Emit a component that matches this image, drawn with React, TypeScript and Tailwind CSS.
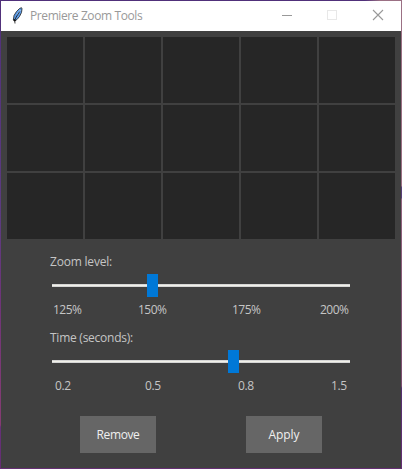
import React from 'react';

function Feather() {
  return (
    <svg className="ml-[10px] mt-[6px] h-[18px] w-[14px] shrink-0" viewBox="0 0 14 18">
      <path d="M10.5 .7 8.5 1.5 5.5 4.5 3 8.5 2.4 12.5 3.6 14 6 12.5 8.5 9.5 10.5 5.5 11 1.8Z" fill="#5b9ae6" stroke="#222" strokeWidth=".8" />
      <path d="M9.5 3 6 8" stroke="#9cc8f5" strokeWidth="1.3" />
      <path d="M8.7 4.5 5.2 10 3.7 13.5 4 16.5" fill="none" stroke="#111" strokeWidth=".8" />
      <path d="M2.5 12.5 4.5 13.8" stroke="#111" strokeWidth="1.5" />
    </svg>
  );
}

function TitleBar() {
  return (
    <header className="flex h-[30px] bg-white">
      <Feather />
      <h1 className="ml-[5px] grow text-[12px] leading-[30px] tracking-[-0.4px] text-[#999]">Premiere Zoom Tools</h1>
      <svg className="h-[30px] w-[137px] shrink-0" viewBox="0 0 137 30" fill="none" shapeRendering="crispEdges">
        <path d="M18 14.5h10" stroke="#999" />
        <rect x="63.5" y="9.5" width="9" height="9" stroke="#e8e8e8" />
        <path d="m109 9 10 10M119 9l-10 10" stroke="#999" shapeRendering="auto" strokeWidth="1.1" />
      </svg>
    </header>
  );
}

interface SliderProps {
  label: string;
  labelClass: string;
  thumbClass: string;
  ticks: { text: string; className: string }[];
  tickClass: string;
}

function Slider({ label, labelClass, thumbClass, ticks, tickClass }: SliderProps) {
  return (
    <section className="ml-[49px] h-[76px] w-[304px]">
      <div className={`h-[19px] text-[12px] leading-4 text-[#c5c5c5] ${labelClass}`}>{label}</div>
      <div className="ml-[2px] flex h-[25px] w-[298px] items-center">
        <div className="relative h-[3px] w-full border-y border-[#d6d6d6] bg-[#f0f0e8]">
          <span className={`absolute top-[-11px] h-[23px] w-[11px] bg-[#0078d7] ${thumbClass}`} />
        </div>
      </div>
      <div className={`flex pt-1 text-[12px] leading-4 text-[#c5c5c5] ${tickClass}`}>
        {ticks.map((t) => (
          <span key={t.text} className={`shrink-0 whitespace-nowrap ${t.className}`}>{t.text}</span>
        ))}
      </div>
    </section>
  );
}

const button = 'h-[37px] w-[76px] bg-[#666] text-[12px] leading-[37px] text-[#f0f0f0]';

export default function App() {
  return (
    <div className="h-[469px] w-[402px] bg-[linear-gradient(to_bottom,#9b7084_0px,#9b7084_186px,#594078_187px,#594078_198px,#936580_199px,#7c4d70_386px,#55306f_388px,#652e73_468px)] font-['Open_Sans','Noto_Sans',sans-serif]">
      <div className="h-[469px] w-[401px] bg-[linear-gradient(to_bottom,#50307a_0px,#5c3b80_220px,#6e3478_300px,#813b74_400px,#853b72_425px,#653078_427px,#652e73_469px)] pl-px">
        <div className="-ml-px h-px w-[402px] bg-[linear-gradient(to_right,#50307a_0px,#50307a_365px,#9b7084_380px)]" />
        <main className="h-[467px] bg-[#404040]">
          <TitleBar />
          <div className="grid grid-cols-[repeat(5,76px)] grid-rows-[repeat(3,66px)] gap-[2px] pl-[6px] pt-[6px]">
            {Array.from({ length: 15 }, (_, i) => (
              <div key={i} className="bg-[#262626]" />
            ))}
          </div>
          <div className="pt-[15px]">
            <Slider
              label="Zoom level:"
              labelClass="tracking-[-0.2px]"
              thumbClass="left-[95px]"
              tickClass="tracking-[-0.5px]"
              ticks={[
                { text: '125%', className: 'ml-[3px] w-[85px]' },
                { text: '150%', className: 'w-[94px]' },
                { text: '175%', className: 'w-[88px]' },
                { text: '200%', className: '' },
              ]}
            />
            <Slider
              label="Time (seconds):"
              labelClass="tracking-[-0.25px]"
              thumbClass="left-[176px]"
              tickClass="tracking-[-0.4px]"
              ticks={[
                { text: '0.2', className: 'ml-[5px] w-[90px]' },
                { text: '0.5', className: 'w-[93px]' },
                { text: '0.8', className: 'w-[93px]' },
                { text: '1.5', className: '' },
              ]}
            />
          </div>
          <div className="flex gap-[90px] pl-[79px] pt-[10px]">
            <button className={`${button} tracking-[-0.4px]`}>Remove</button>
            <button className={`${button} tracking-[-0.1px]`}>Apply</button>
          </div>
        </main>
        <div className="-ml-px h-px w-[402px] bg-[#652e73]" />
      </div>
    </div>
  );
}
